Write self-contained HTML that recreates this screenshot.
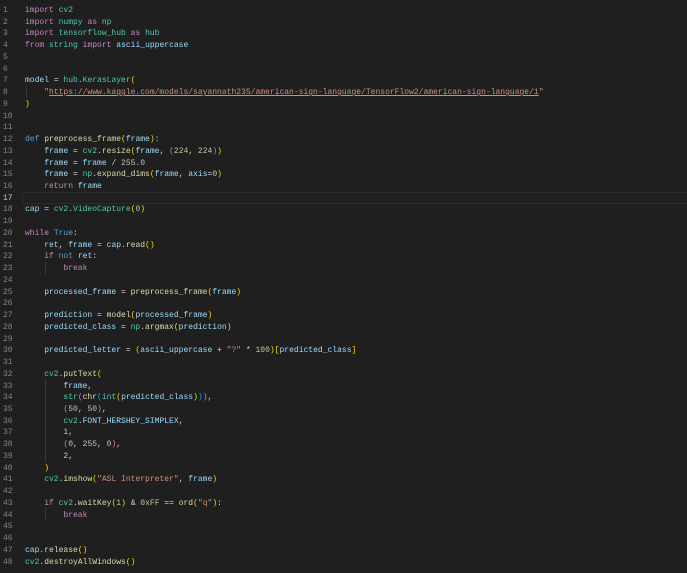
<!DOCTYPE html>
<html><head><meta charset="utf-8"><style>
html,body{margin:0;padding:0;background:#1f1f1f;width:687px;height:573px;overflow:hidden}
#c{position:absolute;left:0;top:5px;font-family:"Liberation Mono",monospace;font-size:8px;line-height:11.74px;color:#d4d4d4}
.l{height:11.74px;position:relative}
.n{position:absolute;left:3px;width:12px;color:#858585}
.t{position:absolute;left:25px;white-space:pre}
.k{color:#c586c0}.kb{color:#569cd6}.m{color:#4ec9b0}.v{color:#9cdcfe}.f{color:#dcdcaa}.s{color:#ce9178}.nu{color:#b5cea8}
.b1{color:#ffd700}.b2{color:#da70d6}.b3{color:#179fff}
#cur{position:absolute;left:22px;top:192px;width:665px;height:10px;border:1px solid #2c2c2c}
.g{position:absolute;width:1px;background:#3a3a3a}
</style></head><body>
<div id="cur"></div>
<div class="g" style="left:26px;top:86px;height:12px"></div>
<div class="g" style="left:45px;top:262px;height:12px"></div>
<div class="g" style="left:45px;top:380px;height:82px"></div>
<div class="g" style="left:45px;top:508px;height:12px"></div>
<div id="c">
<div class="l"><span class="n">1</span><span class="t"><span class="k">import</span> <span class="m">cv2</span></span></div>
<div class="l"><span class="n">2</span><span class="t"><span class="k">import</span> <span class="m">numpy</span> <span class="k">as</span> <span class="m">np</span></span></div>
<div class="l"><span class="n">3</span><span class="t"><span class="k">import</span> <span class="m">tensorflow_hub</span> <span class="k">as</span> <span class="m">hub</span></span></div>
<div class="l"><span class="n">4</span><span class="t"><span class="k">from</span> <span class="m">string</span> <span class="k">import</span> <span class="v">ascii_uppercase</span></span></div>
<div class="l"><span class="n">5</span></div>
<div class="l"><span class="n">6</span></div>
<div class="l"><span class="n">7</span><span class="t"><span class="v">model</span> = <span class="m">hub</span>.<span class="m">KerasLayer</span><span class="b1">(</span></span></div>
<div class="l"><span class="n">8</span><span class="t">    <span class="s">"<u>https://www.kaggle.com/models/sayannath235/american-sign-language/TensorFlow2/american-sign-language/1</u>"</span></span></div>
<div class="l"><span class="n">9</span><span class="t"><span class="b1">)</span></span></div>
<div class="l"><span class="n">10</span></div>
<div class="l"><span class="n">11</span></div>
<div class="l"><span class="n">12</span><span class="t"><span class="kb">def</span> <span class="f">preprocess_frame</span><span class="b1">(</span><span class="v">frame</span><span class="b1">)</span>:</span></div>
<div class="l"><span class="n">13</span><span class="t">    <span class="v">frame</span> = <span class="m">cv2</span>.<span class="f">resize</span><span class="b1">(</span><span class="v">frame</span>, <span class="b2">(</span><span class="nu">224</span>, <span class="nu">224</span><span class="b2">)</span><span class="b1">)</span></span></div>
<div class="l"><span class="n">14</span><span class="t">    <span class="v">frame</span> = <span class="v">frame</span> / <span class="nu">255.0</span></span></div>
<div class="l"><span class="n">15</span><span class="t">    <span class="v">frame</span> = <span class="m">np</span>.<span class="f">expand_dims</span><span class="b1">(</span><span class="v">frame</span>, <span class="v">axis</span>=<span class="nu">0</span><span class="b1">)</span></span></div>
<div class="l"><span class="n">16</span><span class="t">    <span class="k">return</span> <span class="v">frame</span></span></div>
<div class="l"><span class="n" style="color:#c6c6c6">17</span></div>
<div class="l"><span class="n">18</span><span class="t"><span class="v">cap</span> = <span class="m">cv2</span>.<span class="m">VideoCapture</span><span class="b1">(</span><span class="nu">0</span><span class="b1">)</span></span></div>
<div class="l"><span class="n">19</span></div>
<div class="l"><span class="n">20</span><span class="t"><span class="k">while</span> <span class="kb">True</span>:</span></div>
<div class="l"><span class="n">21</span><span class="t">    <span class="v">ret</span>, <span class="v">frame</span> = <span class="v">cap</span>.<span class="f">read</span><span class="b1">()</span></span></div>
<div class="l"><span class="n">22</span><span class="t">    <span class="k">if</span> <span class="kb">not</span> <span class="v">ret</span>:</span></div>
<div class="l"><span class="n">23</span><span class="t">        <span class="k">break</span></span></div>
<div class="l"><span class="n">24</span></div>
<div class="l"><span class="n">25</span><span class="t">    <span class="v">processed_frame</span> = <span class="f">preprocess_frame</span><span class="b1">(</span><span class="v">frame</span><span class="b1">)</span></span></div>
<div class="l"><span class="n">26</span></div>
<div class="l"><span class="n">27</span><span class="t">    <span class="v">prediction</span> = <span class="f">model</span><span class="b1">(</span><span class="v">processed_frame</span><span class="b1">)</span></span></div>
<div class="l"><span class="n">28</span><span class="t">    <span class="v">predicted_class</span> = <span class="m">np</span>.<span class="f">argmax</span><span class="b1">(</span><span class="v">prediction</span><span class="b1">)</span></span></div>
<div class="l"><span class="n">29</span></div>
<div class="l"><span class="n">30</span><span class="t">    <span class="v">predicted_letter</span> = <span class="b1">(</span><span class="v">ascii_uppercase</span> + <span class="s">"?"</span> * <span class="nu">100</span><span class="b1">)[</span><span class="v">predicted_class</span><span class="b1">]</span></span></div>
<div class="l"><span class="n">31</span></div>
<div class="l"><span class="n">32</span><span class="t">    <span class="m">cv2</span>.<span class="f">putText</span><span class="b1">(</span></span></div>
<div class="l"><span class="n">33</span><span class="t">        <span class="v">frame</span>,</span></div>
<div class="l"><span class="n">34</span><span class="t">        <span class="m">str</span><span class="b2">(</span><span class="f">chr</span><span class="b3">(</span><span class="m">int</span><span class="b1">(</span><span class="v">predicted_class</span><span class="b1">)</span><span class="b3">)</span><span class="b2">)</span>,</span></div>
<div class="l"><span class="n">35</span><span class="t">        <span class="b2">(</span><span class="nu">50</span>, <span class="nu">50</span><span class="b2">)</span>,</span></div>
<div class="l"><span class="n">36</span><span class="t">        <span class="m">cv2</span>.<span class="v">FONT_HERSHEY_SIMPLEX</span>,</span></div>
<div class="l"><span class="n">37</span><span class="t">        <span class="nu">1</span>,</span></div>
<div class="l"><span class="n">38</span><span class="t">        <span class="b2">(</span><span class="nu">0</span>, <span class="nu">255</span>, <span class="nu">0</span><span class="b2">)</span>,</span></div>
<div class="l"><span class="n">39</span><span class="t">        <span class="nu">2</span>,</span></div>
<div class="l"><span class="n">40</span><span class="t">    <span class="b1">)</span></span></div>
<div class="l"><span class="n">41</span><span class="t">    <span class="m">cv2</span>.<span class="f">imshow</span><span class="b1">(</span><span class="s">"ASL Interpreter"</span>, <span class="v">frame</span><span class="b1">)</span></span></div>
<div class="l"><span class="n">42</span></div>
<div class="l"><span class="n">43</span><span class="t">    <span class="k">if</span> <span class="m">cv2</span>.<span class="f">waitKey</span><span class="b1">(</span><span class="nu">1</span><span class="b1">)</span> &amp; <span class="nu">0xFF</span> == <span class="f">ord</span><span class="b1">(</span><span class="s">"q"</span><span class="b1">)</span>:</span></div>
<div class="l"><span class="n">44</span><span class="t">        <span class="k">break</span></span></div>
<div class="l"><span class="n">45</span></div>
<div class="l"><span class="n">46</span></div>
<div class="l"><span class="n">47</span><span class="t"><span class="v">cap</span>.<span class="f">release</span><span class="b1">()</span></span></div>
<div class="l"><span class="n">48</span><span class="t"><span class="m">cv2</span>.<span class="f">destroyAllWindows</span><span class="b1">()</span></span></div>
</div>
</body></html>
